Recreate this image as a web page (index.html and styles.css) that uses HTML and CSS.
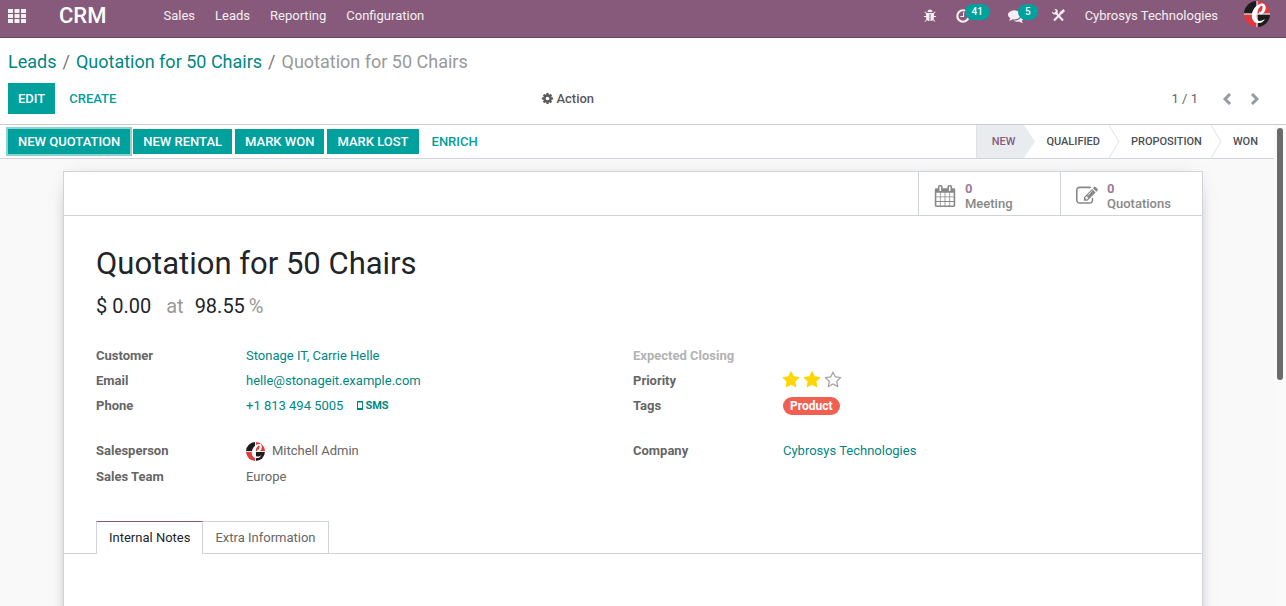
FILE: index.html
```html
<!DOCTYPE html>
<html lang="en">
<head>
<meta charset="utf-8">
<meta name="viewport" content="width=device-width, initial-scale=1">
<title>Quotation for 50 Chairs - CRM</title>
<link rel="stylesheet" href="styles.css">
</head>
<body>
<svg class="defs" aria-hidden="true">
  <symbol id="i-star" viewBox="0 0 1792 1792"><path d="M1728 647q0 22-26 48l-363 354 86 500q1 7 1 20 0 21-10.5 35.5t-30.5 14.5q-19 0-40-12l-449-236-449 236q-22 12-40 12-21 0-31.5-14.5t-10.5-35.5q0-6 2-20l86-500-364-354q-25-27-25-48 0-37 56-46l502-73 225-455q19-41 49-41t49 41l225 455 502 73q56 9 56 46z"/></symbol>
  <symbol id="i-star-o" viewBox="0 0 1792 1792"><path d="M1201 1004l306-297-422-62-189-382-189 382-422 62 306 297-73 421 378-199 377 199zm527-357q0 22-26 48l-363 354 86 500q1 7 1 20 0 50-41 50-19 0-40-12l-449-236-449 236q-22 12-40 12-21 0-31.5-14.5t-10.5-35.5q0-6 2-20l86-500-364-354q-25-27-25-48 0-37 56-46l502-73 225-455q19-41 49-41t49 41l225 455 502 73q56 9 56 46z"/></symbol>
  <symbol id="i-logo" viewBox="0 0 26 26">
    <path fill="#1d1b1c" d="M12.500 0A13 13 0 0 0 0 12.500H12.500z"/>
    <path fill="#e03a3c" d="M13.500 0A13 13 0 0 1 26 12.500H13.500z"/>
    <path fill="#e03a3c" d="M12.500 26A13 13 0 0 1 0 13.500H12.500z"/>
    <path fill="#1d1b1c" d="M13.500 26A13 13 0 0 0 26 13.500H13.500z"/>
    <path fill="none" stroke="#fff" stroke-width="1" d="M0 13H26M13 0V26"/>
    <path fill="#fff" d="M20 3c-5-2-11 4-12 10-1 6 3 10 7 9 3 0 5-2 6-4-3 2-7 3-8 0-2-4 1-11 4-13 2-1 2 1 1 4-1 2-2 3-2 1-2 2 0 4 2 3 4-2 5-8 2-10z"/>
  </symbol>
</svg>
<div class="app">
  <header class="navbar">
    <button class="nav-btn apps" aria-label="Applications"><svg width="18" height="14" viewBox="0 0 18 14"><path d="M0 0h5v4H0zM6.500 0h5v4h-5zM13 0h5v4h-5zM0 5h5v4H0zM6.500 5h5v4h-5zM13 5h5v4h-5zM0 10h5v4H0zM6.500 10h5v4h-5zM13 10h5v4h-5z"/></svg></button>
    <a class="brand" href="#">CRM</a>
    <nav class="menu">
      <a href="#">Sales</a><a href="#">Leads</a><a href="#">Reporting</a><a href="#">Configuration</a>
    </nav>
    <div class="systray">
      <button class="nav-btn" aria-label="Debug"><svg width="14" height="14" viewBox="0 0 1792 1792"><path d="M1696 960q0 26-19 45t-45 19h-224q0 171-67 290l208 209q19 19 19 45t-19 45q-18 19-45 19t-45-19l-198-197q-5 5-15 13t-42 28.500-65 36.500-82 29-97 13v-896h-128v896q-51 0-101.500-13.500t-87-33-66-39-43.500-32.500l-15-14-183 207q-20 21-48 21-24 0-43-16-19-18-20.500-44.500t15.500-46.500l202-227q-58-114-58-274h-224q-26 0-45-19t-19-45 19-45 45-19h224v-294l-173-173q-19-19-19-45t19-45 45-19 45 19l173 173h844l173-173q19-19 45-19t45 19 19 45-19 45l-173 173v294h224q26 0 45 19t19 45zm-480-576h-640q0-133 93.500-226.500t226.500-93.500 226.500 93.500 93.500 226.500z"/></svg></button>
      <button class="nav-btn activities" aria-label="Activities"><svg width="14" height="14" viewBox="0 0 13 13"><circle class="line" cx="6.500" cy="6.500" r="5.300"/><path class="thin" d="M7 3v4H4"/></svg><span class="badge">41</span></button>
      <button class="nav-btn messages" aria-label="Messages"><svg width="16" height="16" viewBox="0 0 1792 1792"><path d="M1408 768q0 139-94 257t-256.500 186.500-353.500 68.500q-86 0-176-16-124 88-278 128-36 9-86 16h-3q-11 0-20.500-8t-11.500-21q-1-3-1-6.500t.5-6.500 2-6l2.500-5 3.500-5.500 4-5 4.500-5 4-4.500q5-6 23-25t26-29.500 22.500-29 25-38.500 20.500-44q-124-72-195-177t-71-224q0-139 94-257t256.500-186.500 353.500-68.500 353.500 68.500 256.500 186.500 94 257zm384 256q0 120-71 224.500t-195 176.500q10 24 20.500 44t25 38.500 22.500 29 26 29.500 23 25q1 1 4 4.500t4.500 5 4 5 3.500 5.500l2.500 5 2 6 .5 6.500-1 6.500q-3 14-13 22t-22 7q-50-7-86-16-154-40-278-128-90 16-176 16-271 0-472-132 58 4 88 4 161 0 309-45t264-129q125-92 192-212t67-254q0-77-23-152 129 71 204 178t75 230z"/></svg><span class="badge">5</span></button>
      <button class="nav-btn" aria-label="Tools"><svg width="13" height="13" viewBox="0 0 13 13"><path class="line" d="M3.500 3.500L11 11.500"/><path class="line" d="M2 11.500L8 5.500"/><path d="M0 2.500L2 4l2-2L2.500.2C5-.5 6.500 2 5.500 4 4.500 6 0 6.500 0 2.500zM13 2l-3 3-2 1-1-1 1-2 3.500-3z"/></svg></button>
      <button class="nav-btn company">Cybrosys Technologies</button>
      <button class="nav-btn" aria-label="User"><svg width="26" height="26"><use href="#i-logo"/></svg></button>
    </div>
  </header>

  <section class="control-panel">
    <nav class="breadcrumb" aria-label="Breadcrumb">
      <a href="#">Leads</a><span>/</span><a href="#">Quotation for 50 Chairs</a><span>/</span><span class="current">Quotation for 50 Chairs</span>
    </nav>
    <div class="cp-row">
      <div class="cp-buttons"><button class="btn primary tall">EDIT</button><button class="btn link">CREATE</button></div>
      <div><button class="action"><svg width="13" height="13" viewBox="0 0 1792 1792"><path d="M1152 896q0-106-75-181t-181-75-181 75-75 181 75 181 181 75 181-75 75-181zm512-109v222q0 12-8 23t-20 13l-185 28q-19 54-39 91 35 50 107 138 10 12 10 25t-9 23q-27 37-99 108t-94 71q-12 0-26-9l-138-108q-44 23-91 38-16 136-29 186-7 28-36 28h-222q-14 0-24.500-8.500t-11.500-21.500l-28-184q-49-16-90-37l-141 107q-10 9-25 9-14 0-25-11-126-114-165-168-7-10-7-23 0-12 8-23 15-21 51-66.500t54-70.500q-27-50-41-99l-183-27q-13-2-21-12.500t-8-23.500v-222q0-12 8-23t19-13l186-28q14-46 39-92-40-57-107-138-10-12-10-24 0-10 9-23 26-36 98.500-107.500t94.500-71.500q13 0 26 10l138 107q44-23 91-38 16-136 29-186 7-28 36-28h222q14 0 24.500 8.500t11.500 21.500l28 184q49 16 90 37l142-107q9-9 24-9 13 0 25 10 129 119 165 170 7 8 7 22 0 12-8 23-15 21-51 66.500t-54 70.500q26 50 41 98l183 28q13 2 21 12.500t8 23.500z"/></svg>Action</button></div>
      <div class="pager"><span class="count">1 / 1</span>
        <button aria-label="Previous"><svg width="9" height="12" viewBox="0 0 9 12"><path d="M7 1L2 6l5 5"/></svg></button>
        <button aria-label="Next"><svg width="9" height="12" viewBox="0 0 9 12"><path d="M2 1l5 5-5 5"/></svg></button>
      </div>
    </div>
  </section>

  <div class="content">
    <main class="form-view">
      <div class="statusbar">
        <div class="status-buttons">
          <button class="btn primary focused">NEW QUOTATION</button><button class="btn primary">NEW RENTAL</button><button class="btn primary">MARK WON</button><button class="btn primary">MARK LOST</button><button class="btn link">ENRICH</button>
        </div>
        <div class="stages">
          <button class="stage active">NEW<svg width="11" height="33" viewBox="0 0 11 33"><path class="fill" d="M0 0L11 16.500 0 33z"/></svg></button>
          <button class="stage">QUALIFIED<svg width="11" height="33" viewBox="0 0 11 33"><path d="M0 0L10 16.500 0 33"/></svg></button>
          <button class="stage">PROPOSITION<svg width="11" height="33" viewBox="0 0 11 33"><path d="M0 0L10 16.500 0 33"/></svg></button>
          <button class="stage last">WON</button>
        </div>
      </div>
      <div class="sheet-bg">
        <article class="sheet">
          <div class="button-box">
            <button class="stat"><svg width="22" height="22" viewBox="0 0 1792 1792"><path d="M192 1664h288v-288h-288v288zm352 0h320v-288h-320v288zm-352-352h288v-320h-288v320zm352 0h320v-320h-320v320zm-352-384h288v-288h-288v288zm736 736h320v-288h-320v288zm-384-736h320v-288h-320v288zm768 736h288v-288h-288v288zm-384-352h320v-320h-320v320zm-352-864v-288q0-13-9.500-22.500t-22.500-9.500h-64q-13 0-22.500 9.500t-9.500 22.500v288q0 13 9.500 22.500t22.500 9.500h64q13 0 22.500-9.500t9.500-22.500zm736 864h288v-320h-288v320zm-384-384h320v-288h-320v288zm384 0h288v-288h-288v288zm32-480v-288q0-13-9.500-22.500t-22.500-9.500h-64q-13 0-22.500 9.500t-9.500 22.500v288q0 13 9.500 22.500t22.500 9.500h64q13 0 22.500-9.500t9.500-22.500zm384-64v1280q0 52-38 90t-90 38h-1408q-52 0-90-38t-38-90v-1280q0-52 38-90t90-38h128v-96q0-66 47-113t113-47h64q66 0 113 47t47 113v96h384v-96q0-66 47-113t113-47h64q66 0 113 47t47 113v96h128q52 0 90 38t38 90z"/></svg><span><b>0</b>Meeting</span></button>
            <button class="stat"><svg width="22" height="22" viewBox="0 0 1792 1792"><path d="M888 1184l116-116-152-152-116 116v56h96v96h56zm440-720q-16-16-33 1l-350 350q-17 17-1 33t33-1l350-350q17-17 1-33zm80 594v190q0 119-84.500 203.500t-203.500 84.500h-832q-119 0-203.500-84.500t-84.500-203.500v-832q0-119 84.500-203.500t203.500-84.500h832q63 0 117 25 15 7 18 23 3 17-9 29l-49 49q-14 14-32 8-23-6-45-6h-832q-66 0-113 47t-47 113v832q0 66 47 113t113 47h832q66 0 113-47t47-113v-126q0-13 9-22l64-64q15-15 35-7t20 29zm-96-738l288 288-672 672h-288v-288zm444 132l-92 92-288-288 92-92q28-28 68-28t68 28l152 152q28 28 28 68t-28 68z"/></svg><span><b>0</b>Quotations</span></button>
          </div>
          <div class="title-block">
            <h1>Quotation for 50 Chairs</h1>
            <h2><span>$ 0.00</span><span class="muted at">at</span><span>98.55</span><span class="muted">%</span></h2>
          </div>
          <div class="groups">
            <dl class="group">
              <dt>Customer</dt><dd><a href="#">Stonage IT, Carrie Helle</a></dd>
              <dt>Email</dt><dd><a href="#">helle@stonageit.example.com</a></dd>
              <dt>Phone</dt><dd><a href="#">+1 813 494 5005</a><a class="sms" href="#"><svg width="6" height="9" viewBox="0 0 6 9"><path d="M0 0h6v9H0zM1 1.500v5.500h4V1.500z" fill-rule="evenodd"/></svg>SMS</a></dd>
            </dl>
            <dl class="group">
              <dt class="empty">Expected Closing</dt><dd></dd>
              <dt>Priority</dt><dd class="stars"><button aria-label="Medium"><svg width="18" height="18"><use href="#i-star"/></svg></button><button aria-label="High"><svg width="18" height="18"><use href="#i-star"/></svg></button><button class="off" aria-label="Very High"><svg width="18" height="18"><use href="#i-star-o"/></svg></button></dd>
              <dt>Tags</dt><dd><span class="tag">Product</span></dd>
            </dl>
            <dl class="group people">
              <dt>Salesperson</dt><dd><svg class="avatar" width="19" height="19"><use href="#i-logo"/></svg>Mitchell Admin</dd>
              <dt>Sales Team</dt><dd>Europe</dd>
            </dl>
            <dl class="group people">
              <dt>Company</dt><dd><a href="#">Cybrosys Technologies</a></dd>
            </dl>
          </div>
          <div class="tabs" role="tablist">
            <button class="tab selected" role="tab" aria-selected="true">Internal Notes</button><button class="tab" role="tab" aria-selected="false">Extra Information</button>
          </div>
          <div class="tab-pane" role="tabpanel"></div>
        </article>
      </div>
    </main>
    <div class="scrollbar"><div class="thumb"></div></div>
  </div>
</div>
</body>
</html>
```
FILE: styles.css
```css
* { box-sizing: border-box; }
body {
  margin: 0;
  font: 13px/20px Roboto, "Open Sans", sans-serif;
  color: #666;
  background: #fff;
}
a { color: #008784; text-decoration: none; }
button { font: inherit; color: inherit; background: none; border: 0; padding: 0; margin: 0; cursor: pointer; }
svg { display: block; fill: currentColor; flex: none; }
h1, h2, dl, dd { margin: 0; font-weight: 400; }
.defs { position: absolute; width: 0; height: 0; }
.app { display: flex; flex-direction: column; height: 100vh; overflow: hidden; }

/* Top navigation */
.navbar {
  display: flex;
  align-items: flex-start;
  flex: none;
  padding: 0 16px 6px 8px;
  background: #875a7b;
  border-bottom: 1px solid #68465f;
  color: #fff;
}
.navbar a, .nav-btn { display: flex; align-items: center; height: 31px; color: #f4eff2; }
.navbar .brand { margin-left: 33px; font-size: 22px; font-weight: 500; color: #fff; }
.menu { display: flex; gap: 20px; margin-left: 57px; }
.systray { display: flex; margin-left: auto; }
.nav-btn.activities { margin-left: 19px; }
.nav-btn.messages { margin-left: 18px; margin-right: 14px; }
.nav-btn.company { margin: 0 26px 0 20px; }
.systray .line { fill: none; stroke: currentColor; stroke-width: 2; }
.thin { fill: none; stroke: currentColor; stroke-width: 1; }
.systray .nav-btn:last-child { height: 28px; }
.badge {
  align-self: flex-start;
  margin: 4px 0 0 -6px;
  padding: 0 7px;
  border-radius: 8px;
  background: #00a09d;
  color: #fff;
  font-size: 10px;
  font-weight: 500;
  line-height: 16px;
}
.activities .badge { margin-left: -5px; }

/* Control panel */
.control-panel { flex: none; padding: 12px 8px 10px; border-bottom: 1px solid #ccc; }
.breadcrumb { display: flex; gap: 6px; font-size: 18px; line-height: 24px; color: #777; }
.breadcrumb .current { color: #999; }
.cp-row { display: grid; grid-template-columns: 42% 1fr auto; align-items: center; margin-top: 9px; }
.cp-buttons { display: flex; gap: 4px; }
.btn { height: 25px; padding: 0 10px; font-weight: 500; white-space: nowrap; }
.btn.primary { background: #00a09d; color: #fff; }
.btn.link { color: #00a09d; }
.cp-buttons .btn { height: 31px; }
.action { display: flex; align-items: center; gap: 2px; font-weight: 500; color: #5a5a5a; }
.pager { display: flex; align-items: center; padding-right: 19px; gap: 18px; }
.pager .count { margin-right: 7px; }
.pager svg { fill: none; stroke: #969ba0; stroke-width: 3; }

/* Content */
.content { display: flex; flex: 1; min-height: 0; }
.form-view { display: flex; flex-direction: column; flex: 1; min-width: 0; overflow: hidden; background: #f9f9f9; }
.scrollbar { flex: none; width: 12px; padding: 3px; background: #fafafa; }
.thumb { height: 53%; border-radius: 3px; background: #6b6b6b; }

.statusbar {
  display: flex;
  justify-content: space-between;
  flex: none;
  padding-left: 8px;
  border-bottom: 1px solid #ced4da;
  background: #fff;
}
.status-buttons { display: flex; align-items: center; gap: 3px; }
.focused { box-shadow: 0 0 0 2px #8cd3cf; }
.stages { display: flex; border-left: 1px solid #dee2e6; }
.stage { display: flex; align-items: center; height: 33px; padding-left: 11px; font-size: 11px; font-weight: 500; color: #495057; }
.stage svg { margin-left: 9px; fill: none; stroke: #dee2e6; }
.stage .fill { fill: #e9ecef; stroke: none; }
.stage.active { padding-left: 15px; color: #875a7b; background: linear-gradient(#e9ecef, #e9ecef) no-repeat 0 0 / calc(100% - 11px) 100%; }
.stage.last { padding-right: 16px; }

.sheet-bg { flex: none; padding: 12px 8px 0 0; }
.sheet {
  max-width: 1140px;
  margin: 0 auto;
  background: #fff;
  border: 1px solid #ced4da;
  box-shadow: 0 5px 20px -15px #000, 0 0 16px rgba(0, 0, 0, .04);
}
.button-box { display: flex; justify-content: flex-end; border-bottom: 1px solid #ced4da; }
.stat {
  display: flex;
  align-items: center;
  gap: 9px;
  width: 142px;
  height: 43px;
  padding: 4px 0 0 15px;
  border-left: 1px solid #ced4da;
  text-align: left;
  line-height: 15px;
  font-weight: 500;
  color: #888;
}
.stat b { display: block; color: #a17a97; font-weight: 700; }

.title-block { padding: 29px 32px 0; color: #212529; }
.title-block h1 { font-size: 31px; line-height: 38px; }
.title-block h2 { display: flex; margin-top: 11px; font-size: 20px; line-height: 24px; }
.title-block .at { margin: 0 11px 0 15px; }
.title-block .muted { color: #999; }
.title-block .muted:last-child { margin-left: 4px; }

.groups { display: grid; grid-template-columns: 1fr 1fr; row-gap: 20px; padding: 25px 32px 0; }
.group { display: grid; grid-template-columns: 150px 1fr; grid-auto-rows: 25px; align-items: center; align-content: start; }
.group.people { grid-auto-rows: 26px; }
.group dt { font-weight: 700; }
.group .empty { color: #b3b3b3; }
.group dd { display: flex; align-items: center; }
.sms { display: flex; align-items: center; gap: 2px; margin-left: 14px; font-size: 11px; font-weight: 700; }
.stars { gap: 3px; color: #ffd700; }
.stars button { padding-bottom: 2px; }
.stars button:first-child { margin-left: -1px; }
.stars .off { color: #a8a8a8; }
.tag { padding: 0 7px; border-radius: 9px; background: #f06050; color: #fff; font-size: 12px; font-weight: 700; line-height: 18px; }
.avatar { margin-right: 7px; }

.tabs { display: flex; margin-top: 31px; padding-left: 32px; border-bottom: 1px solid #ced4da; }
.tab { height: 32px; padding: 0 12px; border: 1px solid #ced4da; border-bottom: 0; border-left: 0; }
.tab.selected { height: 33px; margin-bottom: -1px; border-left: 1px solid #ced4da; border-top-color: #875a7b; background: #fff; color: #212529; }
.tab-pane { min-height: 240px; }
```
